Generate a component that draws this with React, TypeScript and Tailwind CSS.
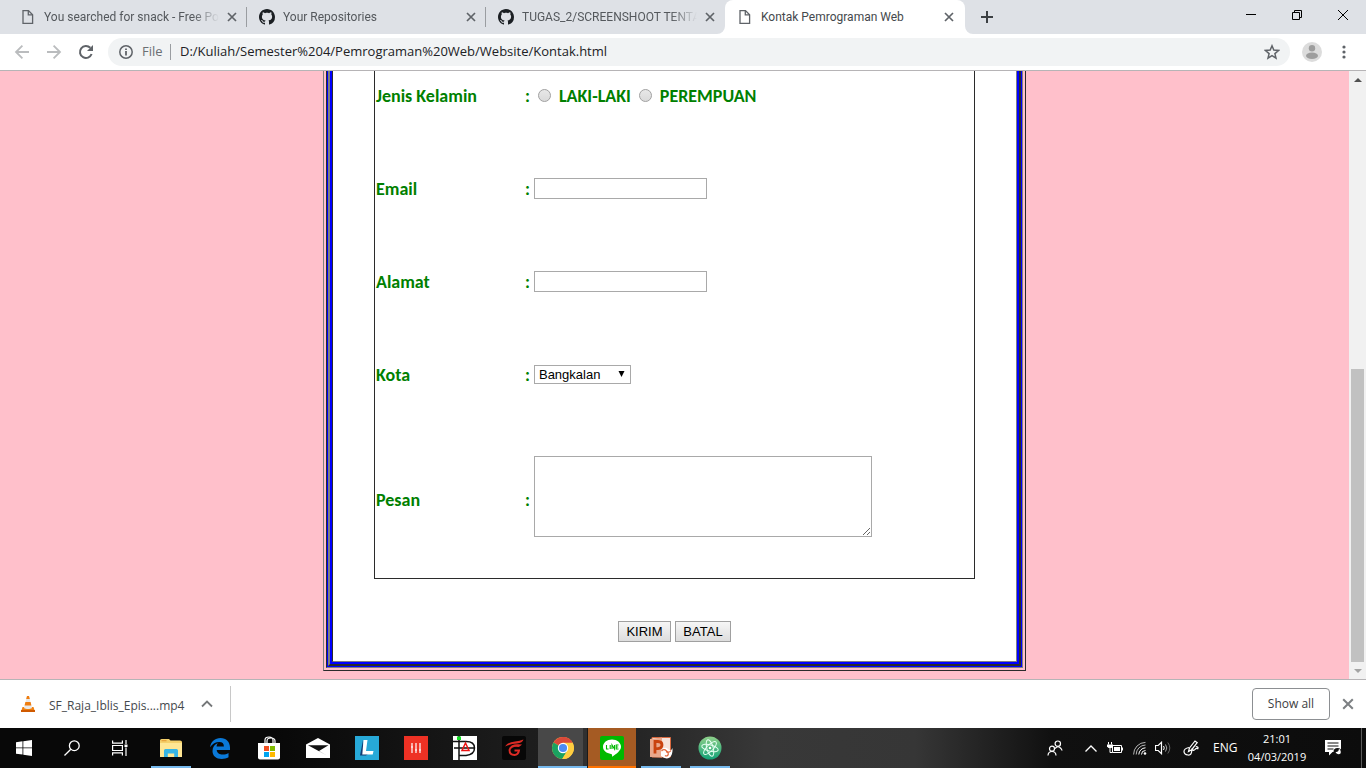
import React from "react";

type IconProps = { className?: string };

const FileIcon = () => (
  <svg viewBox="0 0 16 16" className="size-4 shrink-0" fill="none" stroke="#5f6368" strokeWidth="1.3">
    <path d="M3 1.6h5.5L12.6 5.7v8.7H3z" />
    <path d="M8.3 1.8v4.1h4.1" />
  </svg>
);

const GitHubIcon = () => (
  <svg viewBox="0 0 16 16" className="size-4 shrink-0" fill="#1b1f23">
    <path d="M8 0C3.58 0 0 3.58 0 8c0 3.54 2.29 6.53 5.47 7.59.4.07.55-.17.55-.38 0-.19-.01-.82-.01-1.49-2.01.37-2.53-.49-2.69-.94-.09-.23-.48-.94-.82-1.13-.28-.15-.68-.52-.01-.53.63-.01 1.08.58 1.23.82.72 1.21 1.87.87 2.33.66.07-.52.28-.87.51-1.07-1.78-.2-3.64-.89-3.64-3.95 0-.87.31-1.59.82-2.15-.08-.2-.36-1.02.08-2.12 0 0 .67-.21 2.2.82.64-.18 1.32-.27 2-.27s1.36.09 2 .27c1.53-1.04 2.2-.82 2.2-.82.44 1.1.16 1.92.08 2.12.51.56.82 1.27.82 2.15 0 3.07-1.87 3.75-3.65 3.95.29.25.54.73.54 1.48 0 1.07-.01 1.93-.01 2.2 0 .21.15.46.55.38A8.01 8.01 0 0 0 16 8c0-4.42-3.58-8-8-8z" />
  </svg>
);

const Cross = ({ className }: IconProps) => (
  <svg viewBox="0 0 10 10" className={className} fill="none" stroke="currentColor" strokeWidth="1.7">
    <path d="M1 1l8 8M9 1l-8 8" />
  </svg>
);

type TabProps = { title: string; icon: React.ReactNode; active?: boolean; divider?: boolean };

const Tab = ({ title, icon, active, divider }: TabProps) => (
  <div
    className={
      active
        ? "relative flex w-60 items-center rounded-t-lg bg-white pr-[11px] pl-3 text-[#45494d]"
        : "relative flex w-[239px] items-center pr-[10px] pl-3 text-[#54585c]"
    }
  >
    {active && (
      <>
        <svg viewBox="0 0 8 8" className="absolute bottom-0 -left-2 size-2" fill="#fff"><path d="M8 0v8H0a8 8 0 0 0 8-8z" /></svg>
        <svg viewBox="0 0 8 8" className="absolute -right-2 bottom-0 size-2" fill="#fff"><path d="M0 0v8h8a8 8 0 0 1-8-8z" /></svg>
      </>
    )}
    <button className="flex min-w-0 flex-1 items-center gap-2 text-left font-[Roboto,sans-serif] text-[12px]">
      {icon}
      <span
        className={
          active
            ? "flex-1 whitespace-nowrap"
            : "mr-2 min-w-0 flex-1 whitespace-nowrap [mask-image:linear-gradient(to_right,#000_85%,transparent)]"
        }
      >
        {title}
      </span>
    </button>
    <button aria-label="Close tab" className="text-[#5f6368]"><Cross className="size-[10px]" /></button>
    {divider && <div className="absolute top-[7px] right-0 h-5 w-px bg-[#9a9da1]" />}
  </div>
);

const TabStrip = () => (
  <header className="flex h-[34px] shrink-0 bg-[#dee1e6] pl-2">
    <Tab title="You searched for snack - Free Pow" icon={<FileIcon />} divider />
    <Tab title="Your Repositories" icon={<GitHubIcon />} divider />
    <Tab title="TUGAS_2/SCREENSHOOT TENTAN" icon={<GitHubIcon />} />
    <Tab title="Kontak Pemrograman Web" icon={<FileIcon />} active />
    <button aria-label="New tab" className="ml-4 text-[#3c4043]">
      <svg viewBox="0 0 12 12" className="size-3" stroke="currentColor" strokeWidth="2"><path d="M6 0v12M0 6h12" /></svg>
    </button>
    <div className="ml-auto flex h-[29px]">
      <button aria-label="Minimize" className="flex w-[46px] items-center justify-center">
        <svg viewBox="0 0 10 10" className="size-[10px]" stroke="#000"><path d="M0 4.5h10" /></svg>
      </button>
      <button aria-label="Restore" className="flex w-[46px] items-center justify-center">
        <svg viewBox="0 0 10 10" className="size-[10px]" fill="none" stroke="#000"><path d="M.5 2.5h7v7h-7zM2.5 2.5v-2h7v7h-2" /></svg>
      </button>
      <button aria-label="Close" className="flex w-[46px] items-center justify-center">
        <svg viewBox="0 0 10 10" className="size-[10px]" fill="none" stroke="#000"><path d="M0 0l10 10M10 0L0 10" /></svg>
      </button>
    </div>
  </header>
);

const Toolbar = () => (
  <div className="flex h-9 shrink-0 items-center bg-white pl-[14px]">
    <button aria-label="Back" className="mr-4 text-[#babcbe]">
      <svg viewBox="0 0 16 16" className="size-4" fill="none" stroke="currentColor" strokeWidth="1.8"><path d="M15 8H2M8.4 1.6L2 8l6.4 6.4" /></svg>
    </button>
    <button aria-label="Forward" className="mr-4 text-[#babcbe]">
      <svg viewBox="0 0 16 16" className="size-4" fill="none" stroke="currentColor" strokeWidth="1.8"><path d="M1 8h13M7.600 1.6L14 8l-6.400 6.400" /></svg>
    </button>
    <button aria-label="Reload" className="mr-[14px] text-[#5f6368]">
      <svg viewBox="0 0 16 16" className="size-4" fill="none" stroke="currentColor" strokeWidth="2"><path d="M13.600 10A6 6 0 1 1 12.300 3.800" /><path d="M15 1v6H9z" fill="currentColor" stroke="none" /></svg>
    </button>
    <div className="flex h-7 flex-1 items-center rounded-full bg-[#f1f3f4] pr-[10px] pl-[11px]">
      <svg viewBox="0 0 14 14" className="mr-[9px] size-[14px]" fill="none" stroke="#5f6368" strokeWidth="1.500"><circle cx="7" cy="7" r="6.200" /><path d="M7 6v4.500M7 3.400v1.600" strokeWidth="1.800" /></svg>
      <label htmlFor="url" className="w-7 text-[13px] text-[#6b6f73]">File</label>
      <div className="mr-[9px] h-4 w-px bg-[#9a9da1]" />
      <input id="url" className="min-w-0 flex-1 bg-transparent text-[13px] text-[#202124] outline-none" defaultValue="D:/Kuliah/Semester%204/Pemrograman%20Web/Website/Kontak.html" />
      <button aria-label="Bookmark this page">
        <svg viewBox="0 0 16 16" className="size-4" fill="none" stroke="#5f6368" strokeWidth="1.500"><path d="M8 1.800l1.800 4.300 4.700.4-3.600 3.100 1.100 4.500L8 11.700l-4 2.400 1.100-4.500L1.500 6.500l4.700-.4z" /></svg>
      </button>
    </div>
    <button aria-label="Profile" className="mx-3">
      <svg viewBox="0 0 20 20" className="size-5"><circle cx="10" cy="10" r="10" fill="#dcdcdc" /><circle cx="10" cy="6.300" r="3.200" fill="#9d9d9d" /><ellipse cx="10" cy="13.800" rx="6" ry="3.200" fill="#9d9d9d" /></svg>
    </button>
    <button aria-label="Menu" className="mr-[14px] ml-[2px]">
      <svg viewBox="0 0 16 16" className="size-4" fill="#5f6368"><circle cx="8" cy="3" r="1.600" /><circle cx="8" cy="8" r="1.600" /><circle cx="8" cy="13" r="1.600" /></svg>
    </button>
  </div>
);

const field = "border border-[#a9a9a9] bg-white font-[Liberation_Sans,sans-serif] text-[13px] font-normal text-black";

type RowProps = { label: string; id?: string; tall?: boolean; children: React.ReactNode };

const Row = ({ label, id, tall, children }: RowProps) => (
  <tr className={tall ? "h-[157px]" : "h-[93px]"}>
    <th scope="row" className="w-[150px] pl-px text-left font-bold">
      {id ? <label htmlFor={id}>{label}</label> : label}
    </th>
    <td>
      <div className="flex items-center gap-1">
        <span>:</span>
        {children}
      </div>
    </td>
  </tr>
);

const radio = "ml-1 size-[13px] appearance-none rounded-full border border-[#a2a2a2] bg-linear-to-b from-[#e8e8e8] to-[#dadada] checked:bg-[#555]";

const ContactForm = () => (
  <form className="flex flex-1 flex-col items-center bg-white font-[Carlito,Lato,sans-serif] text-[18px] leading-5 font-bold text-[#008000]">
    <div className="-mt-[23px] w-[601px] border border-[#2b2b2b]">
      <table className="w-full border-collapse">
        <tbody>
          <Row label="Jenis Kelamin">
            <input type="radio" name="gender" id="male" className={radio} />
            <label htmlFor="male" className="ml-1">LAKI-LAKI</label>
            <input type="radio" name="gender" id="female" className={radio} />
            <label htmlFor="female" className="ml-1">PEREMPUAN</label>
          </Row>
          <Row label="Email" id="email"><input id="email" type="email" className={field + " h-[21px] w-[173px]"} /></Row>
          <Row label="Alamat" id="address"><input id="address" className={field + " h-[21px] w-[173px]"} /></Row>
          <Row label="Kota" id="city">
            <div className="relative flex">
              <select id="city" className={field + " h-[19px] w-[97px] appearance-none pl-1 leading-4"}>
                <option>Bangkalan</option>
              </select>
              <svg viewBox="0 0 7 6" className="pointer-events-none absolute top-[6px] right-[6px] h-[6px] w-[7px]"><path d="M.5 0h6L3.500 6z" /></svg>
            </div>
          </Row>
          <Row label="Pesan" id="message" tall><textarea id="message" className={field + " mb-[6px] block h-[81px] w-[338px] resize"} /></Row>
        </tbody>
      </table>
    </div>
    <div className="mt-[42px] mb-[19px] flex gap-1 font-[Liberation_Sans,sans-serif] text-[13px] font-normal text-black">
      <button type="submit" className="h-[21px] w-[53px] border border-[#a0a0a0] bg-linear-to-b from-[#f6f6f6] to-[#dddddd] leading-[19px]">KIRIM</button>
      <button type="reset" className="h-[21px] w-14 border border-[#a0a0a0] bg-linear-to-b from-[#f6f6f6] to-[#dddddd] leading-[19px]">BATAL</button>
    </div>
  </form>
);

const Page = () => (
  <div className="flex min-h-0 flex-1 border-t border-[#b6b4b6] bg-[#ffc0cb]">
    <main className="flex flex-1 flex-col overflow-hidden pb-2">
      <div className="mx-auto flex w-[703px] flex-1 flex-col border-x border-b border-r-[#2b2b2b] border-b-[#2b2b2b] border-l-[#808080] px-[2px] pb-[2px]">
        <div className="flex flex-1 flex-col border-x border-b border-r-[#808080] border-b-[#808080] border-l-[#2b2b2b]">
          <div className="flex flex-1 flex-col border-x border-b border-[#0000ff]">
            <div className="flex flex-1 flex-col border-x-2 border-b-2 border-r-[#2b2b2b] border-b-[#2b2b2b] border-l-[#808080]">
              <div className="flex flex-1 flex-col border-x-2 border-b-2 border-[#0000ff]">
                <div className="flex flex-1 flex-col border-x border-b border-r-[#808080] border-b-[#808080] border-l-[#2b2b2b]">
                  <ContactForm />
                </div>
              </div>
            </div>
          </div>
        </div>
      </div>
    </main>
    <div className="flex w-[17px] flex-col items-center bg-[#f1f1f1]">
      <div className="flex h-[17px] items-center"><svg viewBox="0 0 8 4" className="h-1 w-2" fill="#505050"><path d="M4 0l4 4H0z" /></svg></div>
      <div className="flex-[281]" />
      <div className="w-[13px] flex-[293] bg-[#c1c1c1]" />
      <div className="flex h-[17px] items-center"><svg viewBox="0 0 8 4" className="h-1 w-2" fill="#a3a3a3"><path d="M0 0h8L4 4z" /></svg></div>
    </div>
  </div>
);

const Downloads = () => (
  <div className="flex h-[49px] shrink-0 items-center border-t border-[#b6b4b6] bg-white pl-5">
    <button className="flex items-center text-[12px] text-[#45494d]">
      <svg viewBox="0 0 16 18" className="mr-[13px] h-[18px] w-4">
        <path d="M2.500 12h11l1.500 5H1z" fill="#f08010" />
        <path d="M1 15h14v2H1z" fill="#d05a00" />
        <path d="M7 1h2l3 12c-2 1.300-6 1.300-8 0z" fill="#e9e9e9" />
        <path d="M7 1h2l.8 3H6.200zM5.400 7h5.200l.8 3.500H4.600z" fill="#ef7d10" />
      </svg>
      <span className="w-[151px] pt-1 text-left">SF_Raja_Iblis_Epis....mp4</span>
      <svg viewBox="0 0 14 8" className="h-2 w-[14px]" fill="none" stroke="#757779" strokeWidth="1.800"><path d="M2 6.500l5-5 5 5" /></svg>
    </button>
    <div className="ml-4 h-9 w-px bg-[#c8c8c8]" />
    <button className="mr-3 ml-auto h-8 w-[78px] rounded border border-[#8c8f92] text-[12px] font-medium text-[#3c4043]">Show all</button>
    <button aria-label="Close downloads bar" className="mr-3 text-[#7d8083]"><Cross className="size-3" /></button>
  </div>
);

type TaskProps = { label: string; cell?: string; bar?: string; children: React.ReactNode };

const Task = ({ label, cell = "", bar, children }: TaskProps) => (
  <button aria-label={label} className={"relative flex h-10 w-[49px] items-center justify-center " + cell}>
    {children}
    {bar && <span className={"absolute bottom-0 h-[2px] " + bar} />}
  </button>
);

const Taskbar = () => (
  <footer className="flex h-10 shrink-0 items-center bg-[linear-gradient(to_right,#080808_20%,#262626_47%,#383838_56%,#363636_67%,#101010_77%,#0c0c0c)] text-white">
    <div className="mr-[2px] flex">
      <button aria-label="Start" className="flex w-12 justify-center">
        <svg viewBox="0 0 16 16" className="size-4" fill="#fff"><path d="M0 2.200l6.500-.9v6.200H0zM7.300 1.200L16 0v7.500H7.300zM0 8.300h6.500v6.300L0 13.700zM7.300 8.300H16V16l-8.700-1.200z" /></svg>
      </button>
      <button aria-label="Search" className="flex w-12 justify-center">
        <svg viewBox="0 0 16 16" className="size-4" fill="none" stroke="#fff" strokeWidth="1.300"><circle cx="10.300" cy="5.700" r="4.900" /><path d="M6.800 9.200L.5 15.500" /></svg>
      </button>
      <button aria-label="Task view" className="flex w-12 justify-center">
        <svg viewBox="0 0 16 16" className="size-4" fill="none" stroke="#fff" strokeWidth="1.200"><path d="M.6.5v2.600h9.800V.5M.6 15.500v-2.600h9.800v2.600M.6 5.500h9.800v5H.6zM14 0v4M14 7.500V16" /><path d="M12.500 4.500h3v2.500h-3z" fill="#fff" stroke="none" /></svg>
      </button>
    </div>
    <Task label="File Explorer" bar="w-10 bg-[#76b9ed]">
      <svg viewBox="0 0 22 18" className="h-[18px] w-[22px]"><path d="M0 1.500Q0 0 1.500 0H9l1.500 1.500H20q2 0 2 1.500v15H0z" fill="#f5d06b" /><path d="M1 4h21v14H0V4z" fill="#ffe694" /><path d="M1.500 1h5v1.300h-5z" fill="#e8a33d" /><path d="M4 18v-6.500Q4 10 5.500 10h11q1.500 0 1.500 1.500V18h-3.800v-3.500H7.800V18z" fill="#36b4e5" /></svg>
    </Task>
    <Task label="Edge">
      <svg viewBox="0 0 20 21" className="h-[21px] w-5" fill="#0a78d7"><path d="M0 9.200C1 3.500 5 0 10.500 0 16.300 0 20 4 20 9.600v2.300H6.700c.2 3.200 3 4.600 6.100 4.600 2.200 0 4-.6 5.700-1.600v4.300c-1.900 1.100-4.200 1.700-6.700 1.700-5.700 0-9.300-3.200-9.300-8C2.500 9.200 4.600 6.500 8 5c-1 1-1.300 2.200-1.400 3.500h7.300c0-2.900-1.500-4.400-4.600-4.400C5.500 4.100 2.500 6 0 9.200z" /></svg>
    </Task>
    <Task label="Store">
      <svg viewBox="0 0 24 24" className="size-6"><path d="M8 8V4q0-3 4-3t4 3v4M10 8V5q0-3 4-3t4 3v3" fill="none" stroke="#fff" strokeWidth="1.200" /><path d="M1 7h22v14.500q0 2-2 2H3q-2 0-2-2z" fill="#fff" /><path d="M7 10h5v5H7z" fill="#f25022" /><path d="M13 10h5v5h-5z" fill="#7fba00" /><path d="M7 16h5v5H7z" fill="#00a4ef" /><path d="M13 16h5v5h-5z" fill="#ffb900" /></svg>
    </Task>
    <Task label="Mail">
      <svg viewBox="0 0 24 20" className="h-5 w-6"><path d="M12 0l12 6.500V20H0V6.500z" fill="#fff" /><path d="M2 7.200h20.500L13 13l7 4z" fill="#111" /></svg>
    </Task>
    <Task label="LINGO">
      <svg viewBox="0 0 24 24" className="size-6"><path d="M0 0h24v24H0z" fill="#27a9d8" /><path d="M8 4L5 19.500h6l2-1.500L9 15z" fill="#133c73" /><path d="M8.500 4h4l-1.500 11h7.500l-.8 3.500H7.300z" fill="#fff" /></svg>
    </Task>
    <Task label="Mixer">
      <svg viewBox="0 0 24 24" className="size-6"><path d="M0 0h24v24H0z" fill="#ee3124" /><path d="M8 7v10M12 7v10M16 7v10M7 11h2M11 14h2M15 14h2" stroke="#fff" strokeWidth="1.200" /></svg>
    </Task>
    <Task label="Circuit editor">
      <svg viewBox="0 0 24 24" className="size-6" fill="none"><path d="M0 0h24v24H0z" fill="#fff" /><path d="M6 0v24M0 5.500h13q8.500 0 8.500 6.500T13 19.500H6M1 12h21" stroke="#111" strokeWidth="1.500" /><path d="M4 .5h4V4H4z" fill="#11dd22" /><path d="M12.500 7l3.500 7.500H9z" stroke="#ee1111" strokeWidth="1.500" /></svg>
    </Task>
    <Task label="Garena">
      <svg viewBox="0 0 24 24" className="size-6"><rect width="24" height="24" rx="2" fill="#070707" /><path d="M3 10.500Q6 6 13 5.500 18 5.200 21.500 3.500 20.500 7 15 7.500 8 8 3 10.500z" fill="#dd2b25" /><path d="M17.500 10Q9 8.500 7.500 14q0 5 5 5 3.800-.3 4.500-4.500h-4.500" fill="none" stroke="#dd2b25" strokeWidth="1.900" /><path d="M9 9.500Q14 7.500 20 8.500q-1.500 2-4 2z" fill="#dd2b25" /></svg>
    </Task>
    <Task label="Chrome" cell="border-r-4 border-[#303030] bg-[#484848]" bar="left-0 -right-1 bg-[#76b9ed]">
      <svg viewBox="0 0 22 22" className="ml-1 size-[22px]"><circle cx="11" cy="11" r="11" fill="#ffcd40" /><path d="M11 11L1.500 5.500A11 11 0 0 1 20.500 5.500z" fill="#d9493a" /><path d="M11 0a11 11 0 0 1 9.500 5.800H11z" fill="#d9493a" /><path d="M1.500 5.500A11 11 0 0 0 10.200 22L15.500 13.500 11 11z" fill="#1aa260" /><path d="M11 5.800h9.500a11 11 0 0 1-10.300 16.200l5.200-8.500z" fill="#ffcd40" /><circle cx="11" cy="11" r="5.200" fill="#fff" /><circle cx="11" cy="11" r="4.100" fill="#4b8bf5" /></svg>
    </Task>
    <Task label="LINE" cell="border-l border-[#1a1a1a] bg-[#a55b23]" bar="inset-x-0 bg-[#ff7200]">
      <svg viewBox="0 0 24 24" className="size-6"><rect width="24" height="24" rx="2" fill="#00b900" /><path d="M12 3.500c5 0 9 3.200 9 7.200 0 3.700-4.600 7.400-9 10 .2-1.300.3-2.600-1-2.800-4.500-.6-8-3.400-8-7.200 0-4 4-7.200 9-7.200z" fill="#fff" /><path d="M6.500 9v4h2M10.200 9v4M12 13V9l2.500 4V9M18.500 9h-2.300v4h2.300M16.200 11h2" fill="none" stroke="#00b900" strokeWidth="1.100" /></svg>
    </Task>
    <Task label="PowerPoint" bar="w-10 bg-[#76b9ed]">
      <svg viewBox="0 0 24 24" className="size-6"><path d="M3 1.500h18.500V21H3z" fill="#f6e3da" stroke="#d9693f" /><path d="M1 3l12-1.500v20L1 21z" fill="#e9a88c" /><path d="M6 17.500V5.500h3q4 .2 4 3.500t-4 3.600H6" fill="none" stroke="#c9430f" strokeWidth="2.800" /><path d="M12 14q4-4 7-1t4.500-1q.5 7-3 9.500T12 20z" fill="#fff" /><path d="M12.500 15q2.500-2.500 5 0t4.500-.5M16 19.500a2 2 0 1 0 1-3.500" fill="none" stroke="#e0673c" strokeWidth="1.200" /></svg>
    </Task>
    <Task label="Atom" bar="w-10 bg-[#76b9ed]">
      <svg viewBox="0 0 24 24" className="size-6" fill="none"><defs><linearGradient id="atom" x1="0" y1="0" x2="0" y2="1"><stop offset="0" stopColor="#8fd08a" /><stop offset="1" stopColor="#12a277" /></linearGradient></defs><circle cx="12" cy="12" r="11.500" fill="url(#atom)" /><g stroke="#e6fff3" strokeWidth="1"><ellipse cx="12" cy="12" rx="8.500" ry="3.200" transform="rotate(15 12 12)" /><ellipse cx="12" cy="12" rx="8.500" ry="3.200" transform="rotate(75 12 12)" /><ellipse cx="12" cy="12" rx="8.500" ry="3.200" transform="rotate(135 12 12)" /></g><circle cx="12" cy="12" r="1.300" fill="#fff" /></svg>
    </Task>
    <div className="ml-auto flex items-center">
      <button aria-label="People" className="mr-[22px]">
        <svg viewBox="0 0 16 16" className="size-4" fill="none" stroke="#fff" strokeWidth="1.200"><circle cx="10.800" cy="3.700" r="2.700" /><path d="M8 8.500q3-3.500 6 0l1.200 2" /><circle cx="5" cy="8.700" r="2.500" /><path d="M1 15.500q.2-4 4-4t4 4" /></svg>
      </button>
      <button aria-label="Show hidden icons" className="mr-[10px]">
        <svg viewBox="0 0 12 7" className="h-[7px] w-3" fill="none" stroke="#fff" strokeWidth="1.300"><path d="M.5 6.500L6 1l5.500 5.500" /></svg>
      </button>
      <button aria-label="Battery" className="mr-[10px]">
        <svg viewBox="0 0 16 12" className="h-3 w-4" fill="none" stroke="#fff"><path d="M5.500 3.500h9v7h-9zM15.500 5.500v3" /><path d="M7 5h6v4H7z" fill="#fff" stroke="none" /><path d="M1.500 0v2.500M4.500 0v2.500M3 6v4.500h2.500" /><path d="M0 2.500h6v2L4.500 6h-3L0 4.500z" fill="#fff" stroke="none" /></svg>
      </button>
      <button aria-label="Network" className="mr-2">
        <svg viewBox="0 0 14 14" className="size-[14px]" fill="none" stroke="#fff"><path d="M8.500 13.500a4 4 0 0 1 4-4M5.800 13.500a7 7 0 0 1 6.700-6.700" /><path d="M3.200 13.500A9.500 9.500 0 0 1 12.500 4M.6 13.500A12 12 0 0 1 12.500 1.400" stroke="#b5b5b5" /><circle cx="12" cy="12.500" r="1.300" fill="#fff" stroke="none" /></svg>
      </button>
      <button aria-label="Volume" className="mr-3">
        <svg viewBox="0 0 16 14" className="h-[14px] w-4" fill="none" stroke="#fff"><path d="M.5 4.500h2.700L6.500 1.300v11.400L3.200 9.500H.5z" strokeWidth="1.200" /><path d="M8.500 5q1.500 2 0 4" /><path d="M10.500 3.500q2.600 3.500 0 7" stroke="#aaa" /><path d="M12.800 1.500q4 5.500 0 11" stroke="#666" /></svg>
      </button>
      <button aria-label="Windows Ink" className="mr-[14px]">
        <svg viewBox="0 0 16 16" className="size-4" fill="none" stroke="#fff" strokeWidth="1.200"><path d="M5.500 11.500l1-3.500 5.500-7 2.200 1.700-5.500 7zM6 7.500q-5 1-5 4t4 3.500 3.800-5.500q2 1.500 3.200 0t2.800-.8q1-1.800-2-2.200" /></svg>
      </button>
      <button className="mr-[10px] w-6 text-[12px]">ENG</button>
      <button className="w-[60px] text-center text-[11px] leading-[18px]"><time className="block">21:01</time><time className="block">04/03/2019</time></button>
      <button aria-label="Notifications" className="mr-3 ml-[18px]">
        <svg viewBox="0 0 17 16" className="h-4 w-[17px]"><path d="M0 0h16v12H7.500L4 15.500V12H0z" fill="#fff" /><path d="M2.500 3h11M2.500 6h11M2.500 9h6" stroke="#111" strokeWidth="1.200" /><circle cx="12.500" cy="12" r="4" fill="#111" /><path d="M15.500 13.500a3.300 3.300 0 0 1-5-1.500q3 .5 3.500-3.200 2.500 2 1.500 4.700z" fill="#fff" /></svg>
      </button>
      <div className="mr-1 ml-[7px] h-10 w-px bg-[#5a5a5a]" />
    </div>
  </footer>
);

export default function App() {
  return (
    <div className="flex h-screen flex-col overflow-hidden font-['Open_Sans','Noto_Sans',sans-serif]">
      <TabStrip />
      <Toolbar />
      <Page />
      <Downloads />
      <Taskbar />
    </div>
  );
}
